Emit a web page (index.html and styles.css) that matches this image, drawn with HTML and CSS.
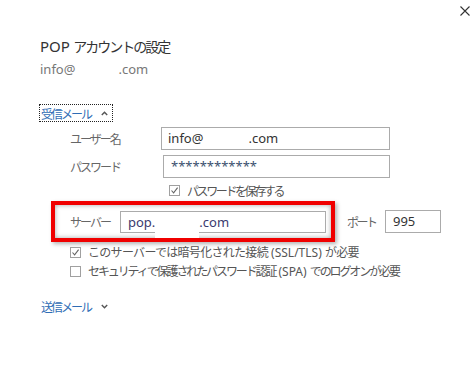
FILE: index.html
```html
<!DOCTYPE html>
<html lang="ja">
<head>
    <meta charset="UTF-8">
    <title>POP アカウントの設定</title>
    <link rel="stylesheet" href="styles.css">
</head>
<body>
    <div class="topbar">
        <span class="close">
            <svg width="10" height="10" viewBox="0 0 10 10"><path d="M0.5 0.5 L9.5 9.5 M9.5 0.5 L0.5 9.5" stroke="#333" stroke-width="1.1" fill="none"/></svg>
        </span>
    </div>

    <h1 class="title"><span class="latin">POP</span> <span class="jp">アカウントの設定</span></h1>
    <div class="account latin">info@<span class="hidden-part"></span>.com</div>

    <div class="toggle focused">
        <span class="jp">受信メール</span>
        <svg class="chevron" width="7" height="5" viewBox="0 0 7 5"><path d="M0.8 4 L3.5 1.2 L6.2 4" stroke="#555" stroke-width="1.4" fill="none"/></svg>
    </div>

    <div class="row first">
        <span class="label">ユーザー名</span>
        <div class="field user latin">info@<span class="hidden-part mid"></span>.com</div>
    </div>
    <div class="row">
        <span class="label">パスワード</span>
        <div class="field pass latin">************</div>
    </div>
    <div class="check-row save">
        <span class="checkbox"><svg width="9" height="9" viewBox="0 0 9 9"><path d="M1.5 4.5 L3.6 6.8 L7.6 1.6" stroke="#666" stroke-width="1.1" fill="none"/></svg></span>
        <span class="check-text">パスワードを保存する</span>
    </div>

    <div class="server-row">
        <div class="highlight">
            <span class="server-label">サーバー</span>
            <div class="field server latin">pop.<span class="hidden-part patch"></span>.com</div>
        </div>
        <span class="port-label">ポート</span>
        <div class="field port latin">995</div>
    </div>

    <div class="check-row opt">
        <span class="checkbox"><svg width="9" height="9" viewBox="0 0 9 9"><path d="M1.5 4.5 L3.6 6.8 L7.6 1.6" stroke="#666" stroke-width="1.1" fill="none"/></svg></span>
        <span class="check-text ssl">このサーバーでは暗号化された接続<span class="latin"> (SSL/TLS) </span>が必要</span>
    </div>
    <div class="check-row opt second">
        <span class="checkbox"></span>
        <span class="check-text spa">セキュリティで保護されたパスワード認証<span class="latin"> (SPA) </span>でのログオンが必要</span>
    </div>

    <div class="toggle send">
        <span class="jp">送信メール</span>
        <svg class="chevron" width="7" height="5" viewBox="0 0 7 5"><path d="M0.8 1 L3.5 3.8 L6.2 1" stroke="#555" stroke-width="1.4" fill="none"/></svg>
    </div>
</body>
</html>
```

FILE: styles.css
```css
body {
    margin: 0;
    background-color: #fff;
    color: #333;
    font-family: "Noto Sans CJK JP", "Noto Sans", sans-serif;
    font-size: 12px;
    width: 476px;
    height: 367px;
    overflow: hidden;
}

.latin {
    font-family: "Noto Sans", "Noto Sans CJK JP", sans-serif;
    letter-spacing: 0;
}

.topbar {
    display: flex;
    justify-content: flex-end;
    height: 16px;
    padding: 6px 6px 0 0;
}

.close {
    display: block;
    width: 10px;
    height: 10px;
}

.close svg {
    display: block;
}

.title {
    margin: 14px 0 0 40px;
    font-size: 15px;
    font-weight: normal;
    line-height: 20px;
    color: #333;
}

.title .jp {
    font-size: 14px;
    letter-spacing: -2px;
}

.account {
    margin: 4px 0 0 40px;
    font-size: 13px;
    line-height: 18px;
    color: #777;
}

.hidden-part {
    display: inline-block;
    width: 43px;
}

.hidden-part.mid {
    width: 45px;
}

.toggle {
    display: flex;
    align-items: center;
    gap: 10px;
    width: fit-content;
    height: 18px;
    margin-left: 39px;
    padding: 0 4px 0 1px;
    font-size: 12px;
    color: #2f6db5;
    box-sizing: border-box;
    border: 1px dotted transparent;
}

.toggle .jp {
    letter-spacing: -2px;
}

.toggle.focused {
    margin-top: 26px;
    border-color: #222;
}

.toggle.send {
    margin-top: 19px;
}

.row {
    display: flex;
    align-items: center;
    height: 23px;
    margin: 5px 0 0 70px;
}

.label {
    width: 91px;
    color: #666;
    font-size: 12px;
    letter-spacing: -2px;
}

.field {
    box-sizing: border-box;
    border: 1px solid #ababab;
    height: 23px;
    line-height: 21px;
    padding-left: 6px;
    font-size: 13px;
    color: #333;
    white-space: nowrap;
}

.field.user {
    width: 229px;
}

.field.pass {
    width: 227px;
    margin-left: 2px;
    padding-left: 7px;
    color: #3a4f6e;
}

.check-row {
    display: flex;
    align-items: center;
    gap: 7px;
    height: 14px;
    color: #555;
    font-size: 12px;
    white-space: nowrap;
}

.check-text {
    letter-spacing: -2.4px;
}

.check-text.ssl {
    letter-spacing: -0.7px;
}

.check-text.spa {
    letter-spacing: -2.1px;
}

.check-row.save {
    margin: 5px 0 0 169px;
}

.check-row.opt {
    margin: 3px 0 0 70px;
}

.check-row.opt.second {
    margin-top: 5px;
}

.checkbox {
    display: flex;
    align-items: center;
    justify-content: center;
    flex-shrink: 0;
    width: 11px;
    height: 11px;
    box-sizing: border-box;
    border: 1px solid #a0a0a0;
    background: #fff;
}

.checkbox svg {
    display: block;
}

.server-row {
    display: flex;
    align-items: center;
    margin: 4px 0 0 51px;
}

.highlight {
    display: flex;
    align-items: center;
    box-sizing: border-box;
    width: 284px;
    height: 41px;
    border: 4px solid #f00000;
    padding-left: 15px;
    box-shadow: inset 0 0 5px rgba(0, 0, 0, 0.35), 2px 2px 4px rgba(0, 0, 0, 0.3);
}

.server-label {
    width: 50px;
    color: #666;
    font-size: 12px;
    letter-spacing: -2px;
}

.field.server {
    width: 206px;
    height: 22px;
    line-height: 20px;
    padding-left: 7px;
    color: #3a3a6e;
}

.hidden-part.patch {
    width: 44px;
    height: 20px;
    background: #fff;
    vertical-align: -11px;
}

.port-label {
    margin-left: 12px;
    width: 38px;
    color: #666;
    font-size: 12px;
    letter-spacing: -2.5px;
}

.field.port {
    width: 56px;
    padding-left: 7px;
}
```
